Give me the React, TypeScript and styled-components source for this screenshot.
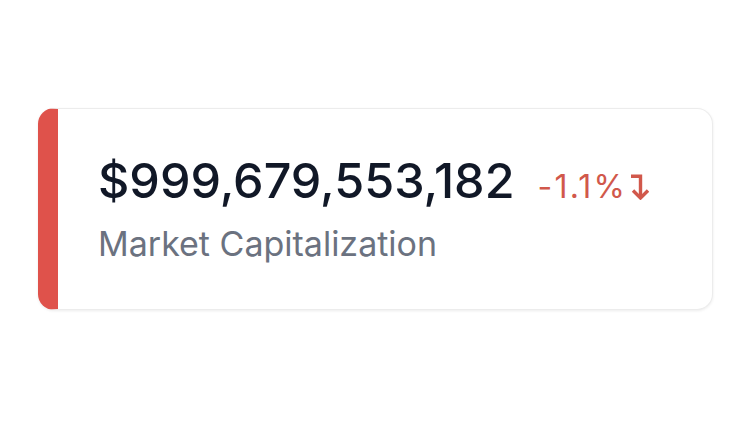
import { createGlobalStyle } from 'styled-components'
import styled from 'styled-components'

const GlobalStyle = createGlobalStyle`
  html, body {
    margin: 0;
    padding: 0;
    background: #ffffff;
    font-family: Inter, "Noto Sans", sans-serif;
  }
`

const Page = styled.div`
  width: 750px;
  height: 422px;
  padding: 108px 37px 0 38px;
  box-sizing: border-box;
`

const Card = styled.div<{ $accent: string }>`
  display: flex;
  flex-direction: column;
  justify-content: center;
  gap: 22px;
  height: 202px;
  box-sizing: border-box;
  padding: 0 0 0 40px;
  background: #ffffff;
  border: 1px solid #ececec;
  border-left: 20px solid ${({ $accent }) => $accent};
  border-radius: 16px;
  box-shadow: 0 1px 3px rgba(0, 0, 0, 0.08);
`

const ValueRow = styled.div`
  display: flex;
  align-items: baseline;
  gap: 23px;
  line-height: 1;
`

const Value = styled.div`
  font-size: 48.5px;
  font-weight: 500;
  color: #111827;
`

const Change = styled.div<{ $color: string }>`
  display: flex;
  align-items: flex-start;
  font-size: 32px;
  letter-spacing: 2.2px;
  color: ${({ $color }) => $color};
`

const Arrow = styled.svg`
  width: 18px;
  height: 26px;
  margin-left: 4px;
  margin-top: 3px;
`

const Label = styled.div`
  font-size: 34px;
  line-height: 1;
  color: #6b7280;
`

const DownArrow = ({ color }: { color: string }) => (
  <Arrow viewBox="0 0 18 26" fill="none" stroke={color} strokeWidth={3.4}>
    <path d="M0 2.2H9.5V24" />
    <path d="M2 16.5L9.5 24L17 16.5" />
  </Arrow>
)

export default function App() {
  const red = '#d1584b'
  return (
    <>
      <GlobalStyle />
      <Page>
        <Card $accent="#df524b">
          <ValueRow>
            <Value>$999,679,553,182</Value>
            <Change $color={red}>
              -1.1%
              <DownArrow color={red} />
            </Change>
          </ValueRow>
          <Label>Market Capitalization</Label>
        </Card>
      </Page>
    </>
  )
}
